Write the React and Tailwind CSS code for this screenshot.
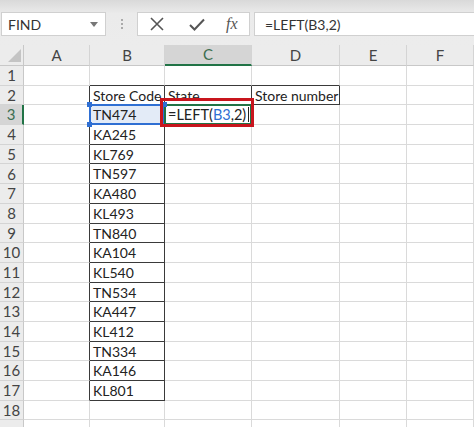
import React from 'react';

const COLS = [
  { key: 'A', w: 'w-[66px]' },
  { key: 'B', w: 'w-[75px]' },
  { key: 'C', w: 'w-[87px]' },
  { key: 'D', w: 'w-[88px]' },
  { key: 'E', w: 'w-[67px]' },
  { key: 'F', w: 'w-[67px]' },
];

const CODES = [
  'TN474', 'KA245', 'KL769', 'TN597', 'KA480', 'KL493', 'TN840', 'KA104',
  'KL540', 'TN534', 'KA447', 'KL412', 'TN334', 'KA146', 'KL801',
];

const ROWS = 18;
const font = { fontFamily: 'Lato, "Open Sans", sans-serif' };

// cells with the thin black table border
function bordered(r, c) {
  if (r === 2 && (c === 1 || c === 2 || c === 3)) return true;
  if (c === 1 && r >= 3 && r <= 17) return true;
  return false;
}

function cellText(r, c) {
  if (r === 2 && c === 1) return 'Store Code';
  if (r === 2 && c === 2) return 'State';
  if (r === 2 && c === 3) return 'Store number';
  if (c === 1 && r >= 3 && r <= 17) return CODES[r - 3];
  return '';
}

function Handle({ className }) {
  return <span className={`absolute w-[5px] h-[5px] bg-[#2f6fd3] z-10 ${className}`} />;
}

function Cell({ r, c }) {
  const darkR = bordered(r, c) || bordered(r, c + 1);
  const darkB = bordered(r, c) || bordered(r + 1, c);
  const base = `relative shrink-0 h-full ${COLS[c].w} border-r border-b ${darkR ? 'border-r-[#3a3a3a]' : 'border-r-[#dadada]'} ${darkB ? 'border-b-[#3a3a3a]' : 'border-b-[#dadada]'}`;
  const text = 'absolute left-[3px] top-[1px] whitespace-nowrap text-[14px] leading-[18px] text-[#222]';

  if (r === 3 && c === 1) {
    return (
      <div className={`${base} bg-[#e3ebf7]`}>
        <div className="absolute inset-[-1px] border-2 border-[#2f6fd3]" />
        <Handle className="-left-[3px] -top-[3px]" />
        <Handle className="-left-[3px] -bottom-[3px]" />
        <Handle className="-right-[3px] -top-[3px]" />
        <span className={text}>{cellText(r, c)}</span>
      </div>
    );
  }

  if (r === 3 && c === 2) {
    return (
      <div className={`${base} bg-white`}>
        <div className="absolute -left-[1px] -top-[1px] w-[88px] h-[21px] border-2 border-[#217346] bg-white flex items-center pl-[2px]">
          <span className="text-[14.5px] leading-[18px] text-[#222] whitespace-nowrap">
            =LEFT(<span className="text-[#2f6fd3]">B3</span>,2)
          </span>
          <span className="ml-[2px] w-px h-[15px] bg-[#222]" />
        </div>
        <div className="absolute -left-[5px] -top-[7px] w-[94px] h-[29px] border-[3px] border-[#c8151d] z-20" />
      </div>
    );
  }

  return (
    <div className={`${base} bg-white`}>
      <span className={text}>{cellText(r, c)}</span>
    </div>
  );
}

function Toolbar() {
  return (
    <div className="h-[45px] shrink-0 bg-gradient-to-b from-[#d9d9d9] via-[#ebebeb] via-30% to-[#ececec] flex items-start pt-[12px] pl-[1px]">
      <div className="w-[105px] h-[24px] bg-white border border-[#d0d0d0] flex items-center pl-[6px] pr-[7px]">
        <span className="text-[14px] text-[#333] flex-1">FIND</span>
        <svg width="8" height="5" viewBox="0 0 8 5"><path d="M0 0h8L4 5z" fill="#777" /></svg>
      </div>
      <div className="w-[31px] h-[24px] flex flex-col items-center justify-center gap-[2px]">
        <span className="w-[2px] h-[2px] bg-[#aaa]" />
        <span className="w-[2px] h-[2px] bg-[#aaa]" />
        <span className="w-[2px] h-[2px] bg-[#aaa]" />
      </div>
      <div className="w-[113px] h-[24px] bg-white border border-[#d0d0d0] flex items-center">
        <svg className="ml-[12px]" width="14" height="14" viewBox="0 0 14 14">
          <path d="M1 1L13 13M13 1L1 13" stroke="#555" strokeWidth="1.6" />
        </svg>
        <svg className="ml-[25px]" width="16" height="13" viewBox="0 0 16 13">
          <path d="M1 7L5.5 11.5L15 1.5" stroke="#555" strokeWidth="2" fill="none" />
        </svg>
        <span className="ml-[21px] text-[16px] italic text-[#555]" style={{ fontFamily: '"Liberation Serif", serif' }}>fx</span>
      </div>
      <div className="ml-[4px] flex-1 h-[24px] bg-white border border-[#d0d0d0] border-r-0 flex items-center pl-[10px]">
        <span className="text-[14px] text-[#333]">=LEFT(B3,2)</span>
      </div>
    </div>
  );
}

export default function App() {
  const rows = Array.from({ length: ROWS }, (_, i) => i + 1);
  return (
    <div className="w-[474px] bg-white flex flex-col" style={font}>
      <Toolbar />
      <div className="flex h-[21px] shrink-0">
        <div className="relative w-[24px] shrink-0 bg-[#ececec] border-r border-b border-[#c8c8c8]">
          <svg className="absolute right-[2px] bottom-[3px]" width="13" height="13" viewBox="0 0 13 13">
            <path d="M13 0V13H0z" fill="#c4c4c4" />
          </svg>
        </div>
        {COLS.map((col) => (
          <div
            key={col.key}
            className={`${col.w} shrink-0 flex items-center justify-center text-[15px] border-r border-r-[#d4d4d4] ${
              col.key === 'C'
                ? 'bg-[#d5d5d5] border-b-2 border-b-[#217346] text-[#3c6e50]'
                : 'bg-[#ececec] border-b border-b-[#c8c8c8] text-[#444]'
            }`}
          >
            {col.key}
          </div>
        ))}
      </div>
      {rows.map((r) => (
        <div key={r} className="flex h-[19.7px] shrink-0">
          <div
            className={`w-[24px] shrink-0 flex items-center justify-center text-[15px] border-b border-b-[#d4d4d4] ${
              r === 3
                ? 'bg-[#d5d5d5] border-r-2 border-r-[#217346] text-[#3c6e50]'
                : 'bg-[#ececec] border-r border-r-[#c8c8c8] text-[#444]'
            }`}
          >
            {r}
          </div>
          {COLS.map((col, ci) => (
            <Cell key={col.key} r={r} c={ci} />
          ))}
        </div>
      ))}
      {/* partly visible row 19 at the bottom edge */}
      <div className="flex h-[7px] shrink-0">
        <div className="w-[24px] shrink-0 bg-[#ececec] border-r border-r-[#c8c8c8]" />
        {COLS.map((col) => (
          <div key={col.key} className={`${col.w} shrink-0 bg-white border-r border-r-[#dadada]`} />
        ))}
      </div>
    </div>
  );
}
